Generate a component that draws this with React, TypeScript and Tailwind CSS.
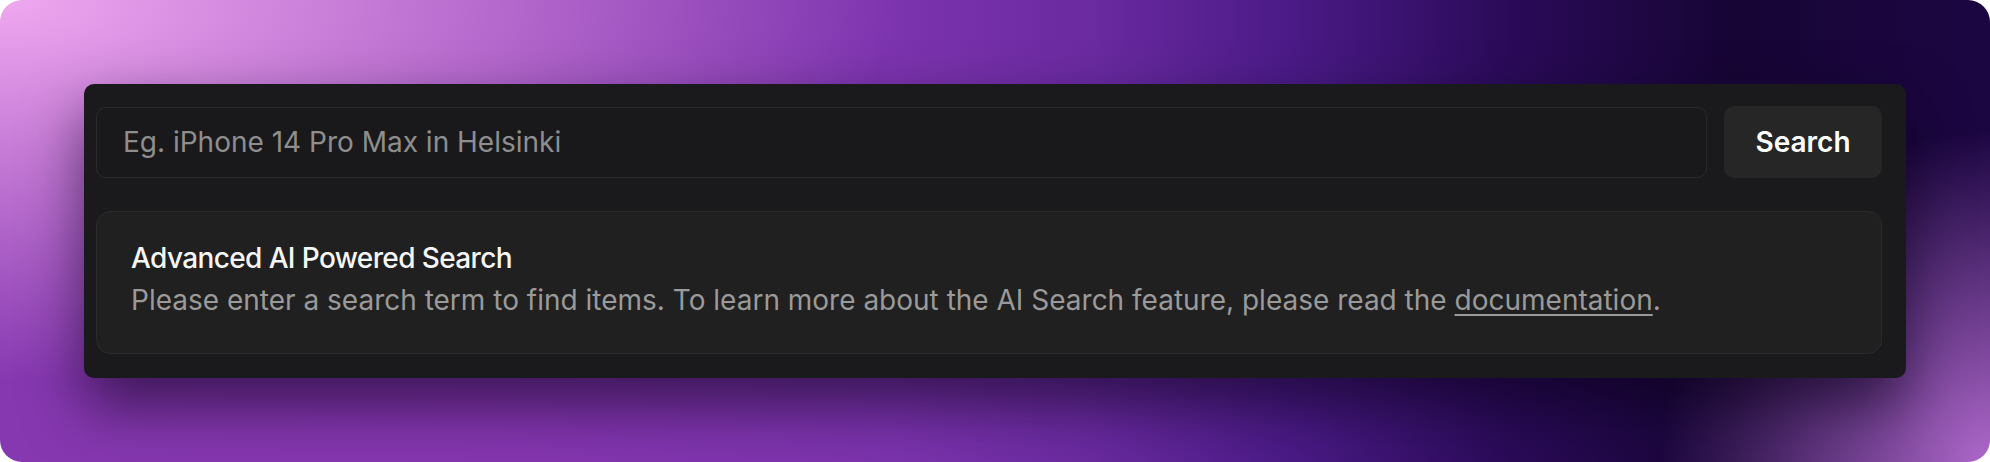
import { FC } from "react";

const SearchPanel: FC = () => {
  return (
    <div className="w-[1822px] rounded-[10px] bg-[#1a1a1c] pl-[12px] pr-[24px] pt-[22px] pb-[24px] shadow-[0_28px_60px_rgba(10,0,25,0.6)]">
      <div className="flex items-center gap-[17px]">
        <input
          type="text"
          placeholder="Eg. iPhone 14 Pro Max in Helsinki"
          className="h-[71px] flex-1 rounded-[10px] border border-[#2a2a2c] bg-[#19191b] px-[26px] text-[28px] text-white outline-none placeholder:text-[#8e8e8e]"
        />
        <button className="h-[72px] w-[158px] rounded-[10px] bg-[#262626] text-[28px] font-semibold text-white">
          Search
        </button>
      </div>

      {/* Info box */}
      <div className="mt-[33px] flex h-[143px] flex-col justify-center rounded-[14px] border border-[#2a2a2a] bg-[#202020] pb-[7px] pl-[34px]">
        <h3 className="text-[28px] leading-[42px] font-medium tracking-[-0.022em] text-[#f5f5f5]">
          Advanced AI Powered Search
        </h3>
        <p className="text-[28px] leading-[42px] text-[#9a9a9a]">
          Please enter a search term to find items. To learn more about the AI
          Search feature, please read the{" "}
          <a href="#" className="underline underline-offset-4">
            documentation
          </a>
          .
        </p>
      </div>
    </div>
  );
};

export default function App() {
  return (
    <div className="h-[462px] w-[1990px] bg-white font-['Inter',sans-serif]">
      <div className="h-full rounded-[22px] bg-[radial-gradient(ellipse_900px_380px_at_0%_0%,rgba(240,168,240,1)_0%,rgba(240,168,240,0)_100%),radial-gradient(circle_330px_at_100%_100%,rgba(174,104,202,1)_0%,rgba(174,104,202,0)_100%),linear-gradient(90deg,#8638b0_0%,#8636b0_25%,#7c33ae_45%,#6a2aa0_55%,#4a1a86_65%,#2a0a58_76%,#170535_87%,#1c0642_100%)] px-[84px] pt-[84px]">
        <SearchPanel />
      </div>
    </div>
  );
}
